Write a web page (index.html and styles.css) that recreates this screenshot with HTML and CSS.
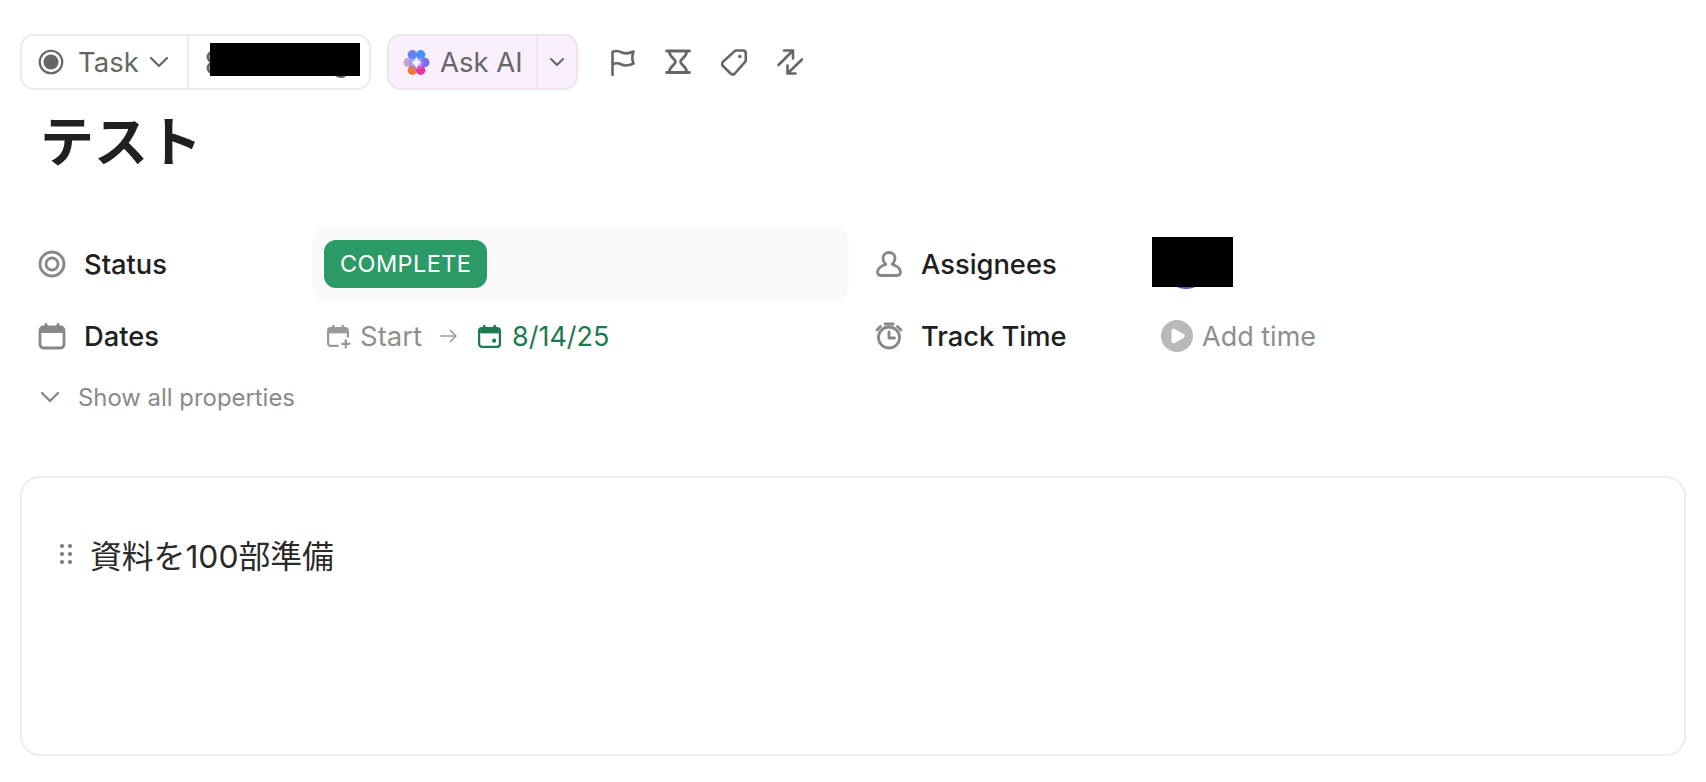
FILE: index.html
```html
<!DOCTYPE html>
<html lang="ja">
<head>
<meta charset="utf-8">
<title>テスト</title>
<link rel="stylesheet" href="styles.css">
</head>
<body>
<div class="toolbar">
  <div class="seg-group">
    <div class="seg seg-type">
      <svg class="ic-task" viewBox="0 0 24 24"><circle cx="12" cy="12" r="10.4" fill="none" stroke="#666" stroke-width="2"/><circle cx="12" cy="12" r="7" fill="#666"/></svg>
      <span class="task-label">Task</span>
      <svg class="chev" viewBox="0 0 20 12"><path d="M2 2l8 8 8-8" fill="none" stroke="#666" stroke-width="2.200" stroke-linecap="round" stroke-linejoin="round"/></svg>
    </div>
    <div class="seg seg-name">
      <svg class="ic-person" viewBox="0 0 24 24"><circle cx="12" cy="7" r="5" fill="none" stroke="#666" stroke-width="3"/><circle cx="12" cy="18" r="5" fill="none" stroke="#666" stroke-width="3"/></svg>
      <span class="name-tail">g</span>
      <span class="redact redact-name"></span>
    </div>
  </div>
  <div class="ai-group">
    <div class="ai-main">
      <svg class="ic-ai" viewBox="0 0 26 26">
        <defs>
          <linearGradient id="ga" x1="0" y1="0" x2="1" y2="1"><stop offset="0" stop-color="#4d8dff"/><stop offset="1" stop-color="#b58bf0"/></linearGradient>
        </defs>
        <circle cx="9" cy="5.500" r="4.500" fill="#6a7ff2"/>
        <circle cx="17" cy="5.500" r="4.500" fill="#3d94ff"/>
        <circle cx="5" cy="13" r="4.500" fill="#c9a3d8"/>
        <circle cx="21" cy="13" r="4.500" fill="#7a6cf0"/>
        <circle cx="9" cy="20.500" r="4.500" fill="#f0783a"/>
        <circle cx="17" cy="20.500" r="4.500" fill="#ee2fa6"/>
        <circle cx="13" cy="13" r="7" fill="url(#ga)" opacity=".55"/>
        <path d="M13 7.500c.8 3.200 2.300 4.700 5.500 5.500-3.200.8-4.700 2.300-5.500 5.500-.8-3.200-2.300-4.700-5.500-5.500 3.200-.8 4.700-2.300 5.500-5.500z" fill="#fbeefb"/>
      </svg>
      <span class="ai-label">Ask AI</span>
    </div>
    <div class="ai-caret">
      <svg class="chev-sm" viewBox="0 0 16 10"><path d="M2 2l6 6 6-6" fill="none" stroke="#666" stroke-width="2" stroke-linecap="round" stroke-linejoin="round"/></svg>
    </div>
  </div>
  <div class="tools">
    <svg class="tool" viewBox="0 0 26 28"><path d="M3.500 27V4C7 2 10 3 13 4.500 16 6 19 5.800 24.500 3.500 23 7.500 23 12 24.500 15.500 19 18 15.500 18 12.500 16.500 9.500 15 6.500 14.800 3.500 16.500" fill="none" stroke="#666" stroke-width="2.600" stroke-linecap="round" stroke-linejoin="round"/></svg>
    <svg class="tool" viewBox="0 0 26 28"><path d="M1.500 3h23M1.500 24.500h23M4.500 3v1.500C4.500 8.500 10.500 11 10.500 13.800S4.500 19 4.500 23v1.500M21.500 3v1.500C21.500 8.500 15.500 11 15.500 13.800S21.500 19 21.500 23v1.500" fill="none" stroke="#666" stroke-width="2.800" stroke-linecap="round" stroke-linejoin="round"/></svg>
    <svg class="tool" viewBox="0 0 26 28"><path d="M15.500 2.500h6.500a2.800 2.800 0 0 1 2.800 2.800v6.700a3 3 0 0 1-.9 2.100L13.800 25.500a3 3 0 0 1-4.200 0L2 18a3 3 0 0 1 0-4.200L13.400 3.400a3 3 0 0 1 2.100-.9z" fill="none" stroke="#666" stroke-width="2.600" stroke-linejoin="round"/><circle cx="18.800" cy="8.500" r="1.800" fill="#666"/></svg>
    <svg class="tool" viewBox="0 0 26 28"><path d="M1.500 17L16 2.500M7 2.500h9v8M25 11.500L10.500 25.500M18.500 25.500h-8v-8" fill="none" stroke="#666" stroke-width="2.600" stroke-linecap="round" stroke-linejoin="round"/></svg>
  </div>
</div>

<h1 class="title">テスト</h1>

<div class="props">
  <div class="prop">
    <div class="prop-label">
      <svg class="ic-prop" viewBox="0 0 28 28"><circle cx="14" cy="14" r="12" fill="none" stroke="#888" stroke-width="2.800"/><circle cx="14" cy="14" r="6" fill="none" stroke="#888" stroke-width="2.800"/></svg>
      <span>Status</span>
    </div>
    <div class="prop-value value-status"><span class="pill">COMPLETE</span></div>
  </div>
  <div class="prop">
    <div class="prop-label label-right">
      <svg class="ic-prop" viewBox="0 0 28 28"><path d="M14 2.500c3.800 0 6 2.700 6 6 0 3-1.500 4.500-2.800 5.800 3.500.9 8.300 3.700 8.300 7.700 0 2.300-1.500 3.500-3.500 3.500H6c-2 0-3.500-1.200-3.500-3.500 0-4 4.800-6.800 8.300-7.700C9.500 13 8 11.500 8 8.500c0-3.300 2.200-6 6-6z" fill="none" stroke="#888" stroke-width="2.800" stroke-linejoin="round"/></svg>
      <span>Assignees</span>
    </div>
    <div class="prop-value value-assignee"><span class="avatar"></span><span class="redact redact-avatar"></span></div>
  </div>
  <div class="prop">
    <div class="prop-label">
      <svg class="ic-prop" viewBox="0 0 28 28"><rect x="2" y="5" width="24" height="21" rx="3.500" fill="none" stroke="#888" stroke-width="2.800"/><path d="M3 5h22v6H3z" fill="#888"/><path d="M8 2.500v4M20 2.500v4" stroke="#888" stroke-width="3" stroke-linecap="round"/></svg>
      <span>Dates</span>
    </div>
    <div class="prop-value value-dates">
      <svg class="ic-date" viewBox="0 0 24 24"><path d="M12 21H4.500A2.500 2.500 0 0 1 2 18.500V6.500A2.500 2.500 0 0 1 4.500 4h14A2.500 2.500 0 0 1 21 6.500V13" fill="none" stroke="#999" stroke-width="2.200"/><path d="M3 4.500h17V9H3z" fill="#999"/><path d="M7 2v3M16 2v3" stroke="#999" stroke-width="2.400" stroke-linecap="round"/><path d="M19 15.500v7M15.500 19h7" stroke="#999" stroke-width="2.200" stroke-linecap="round"/></svg>
      <span class="date-start">Start</span>
      <svg class="ic-arrow" viewBox="0 0 18 14"><path d="M1 7h15M10.500 1.500L16 7l-5.500 5.500" fill="none" stroke="#999" stroke-width="1.500" stroke-linecap="round" stroke-linejoin="round"/></svg>
      <svg class="ic-date" viewBox="0 0 24 24"><rect x="2" y="4" width="20" height="18" rx="2.800" fill="none" stroke="#1d7a50" stroke-width="2.200"/><path d="M3 4.500h18V9H3z" fill="#1d7a50"/><path d="M7 2v3M17 2v3" stroke="#1d7a50" stroke-width="2.400" stroke-linecap="round"/><circle cx="16.500" cy="16" r="2" fill="#1d7a50"/></svg>
      <span class="date-due">8/14/25</span>
    </div>
  </div>
  <div class="prop">
    <div class="prop-label label-right">
      <svg class="ic-prop" viewBox="0 0 28 28"><circle cx="14" cy="15.500" r="10.500" fill="none" stroke="#888" stroke-width="2.800"/><path d="M14 10v6h5.500" fill="none" stroke="#888" stroke-width="2.800" stroke-linecap="round" stroke-linejoin="round"/><path d="M10 2h8M2 8l3.500-3.500M26 8l-3.500-3.500" stroke="#888" stroke-width="2.800" stroke-linecap="round"/></svg>
      <span>Track Time</span>
    </div>
    <div class="prop-value value-time">
      <svg class="ic-play" viewBox="0 0 32 32"><circle cx="16" cy="16" r="16" fill="#b9b9b9"/><path d="M10.500 11c0-1.800 1.600-2.800 3.200-1.900l8.800 5c1.500.8 1.500 3 0 3.800l-8.800 5c-1.600.9-3.200-.1-3.200-1.900z" fill="#fff"/></svg>
      <span class="add-time">Add time</span>
    </div>
  </div>
</div>

<div class="show-all">
  <svg class="chev-show" viewBox="0 0 20 12"><path d="M2 2l8 8 8-8" fill="none" stroke="#888" stroke-width="2.400" stroke-linecap="round" stroke-linejoin="round"/></svg>
  <span>Show all properties</span>
</div>

<div class="card">
  <div class="block">
    <svg class="grip" viewBox="0 0 12 20"><g fill="#777"><circle cx="2" cy="2" r="2"/><circle cx="10" cy="2" r="2"/><circle cx="2" cy="10" r="2"/><circle cx="10" cy="10" r="2"/><circle cx="2" cy="18" r="2"/><circle cx="10" cy="18" r="2"/></g></svg>
    <span class="block-text">資料を100部準備</span>
  </div>
</div>
</body>
</html>
```
FILE: styles.css
```css
* { box-sizing: border-box; }
html, body { margin: 0; height: 100%; background: #fff; }
body {
  padding: 34px 20px 26px 20px;
  font-family: Inter, "Noto Sans CJK JP", sans-serif;
  color: #202020;
  overflow: hidden;
  display: flex;
  flex-direction: column;
}
svg { display: block; flex: none; }

.toolbar { display: flex; align-items: center; height: 56px; flex: none; }
.seg-group {
  display: flex;
  width: 351px;
  height: 56px;
  border: 2px solid #ececec;
  border-radius: 14px;
}
.seg { display: flex; align-items: center; height: 100%; }
.seg-type { width: 167px; padding-left: 16px; border-right: 2px solid #ececec; }
.ic-task { width: 26px; height: 26px; }
.task-label { margin-left: 14px; font-size: 27.5px; color: #666; }
.chev { width: 20px; height: 12px; margin-left: 10px; }
.seg-name { position: relative; flex: 1; padding-left: 12px; padding-right: 20px; }
.ic-person { width: 24px; height: 26px; }
.name-tail { margin-left: auto; font-size: 26px; color: #666; }
.redact { background: #000; display: block; position: absolute; }
.redact-name { left: 21px; top: 7px; width: 150px; height: 33px; }

.ai-group {
  display: flex;
  width: 191px;
  height: 56px;
  margin-left: 16px;
  background: #faeffc;
  border: 2px solid #f0e2f0;
  border-radius: 14px;
}
.ai-main {
  display: flex;
  align-items: center;
  width: 149px;
  padding-left: 14px;
  border-right: 2px solid #f0e2f0;
}
.ic-ai { width: 27px; height: 27px; filter: blur(.5px); }
.ai-label { margin-left: 10px; font-size: 27.5px; color: #666; white-space: nowrap; }
.ai-caret { flex: 1; display: flex; align-items: center; justify-content: center; }
.chev-sm { width: 16px; height: 10px; }

.tools { display: flex; align-items: center; gap: 30px; margin-left: 31px; }
.tool { width: 26px; height: 28px; }

.title {
  margin: 22px 0 0 20px;
  font-size: 54px;
  line-height: 62px;
  height: 62px;
  font-weight: 700;
  color: #202020;
  flex: none;
}

.props {
  display: grid;
  grid-template-columns: 829px 1fr;
  grid-template-rows: 72px 72px;
  margin-top: 54px;
  flex: none;
}
.prop { display: flex; align-items: center; }
.prop-label {
  display: flex;
  align-items: center;
  gap: 18px;
  width: 292px;
  padding-left: 18px;
  font-size: 27.3px;
  font-weight: 500;
  flex: none;
}
.label-right { width: 301px; padding-left: 26px; gap: 18px; }
.ic-prop { width: 28px; height: 28px; }

.prop-value { display: flex; align-items: center; height: 72px; flex: 1; }
.value-status { background: #f9f9f9; border-radius: 14px; padding-left: 12px; }
.pill {
  display: block;
  height: 48px;
  line-height: 48px;
  padding: 0 16px;
  background: #2c9a66;
  border-radius: 12px;
  color: #fff;
  font-size: 23.5px;
  letter-spacing: .4px;
}
.value-assignee { position: relative; }
.avatar { display: block; width: 50px; height: 50px; margin-left: 11px; border-radius: 50%; background: #5b4fd8; }
.redact-avatar { left: 2px; top: 9px; width: 81px; height: 50px; }

.value-dates { padding-left: 14px; font-size: 27.5px; }
.ic-date { width: 25px; height: 25px; }
.date-start { margin-left: 9px; color: #8f8f8f; }
.ic-arrow { width: 18px; height: 14px; margin: 0 19px 0 18px; }
.date-due { margin-left: 10px; color: #1d7a50; font-size: 27px; }

.value-time { padding-left: 11px; font-size: 27px; }
.ic-play { width: 32px; height: 32px; }
.add-time { margin-left: 9px; color: #8f8f8f; }

.show-all {
  display: flex;
  align-items: center;
  height: 30px;
  margin-top: 10px;
  padding-left: 20px;
  gap: 18px;
  font-size: 23.9px;
  color: #8a8a8a;
  flex: none;
}
.chev-show { width: 20px; height: 12px; }

.card {
  flex: 1;
  margin-top: 64px;
  border: 2px solid #eeeeee;
  border-radius: 20px;
  background: #fff;
  padding: 56px 0 0 38px;
}
.block { display: flex; align-items: center; height: 40px; }
.grip { width: 12px; height: 20px; }
.block-text {
  margin-left: 18px;
  font-size: 31.8px;
  color: #2a2a2a;
  font-weight: 400;
}
```
